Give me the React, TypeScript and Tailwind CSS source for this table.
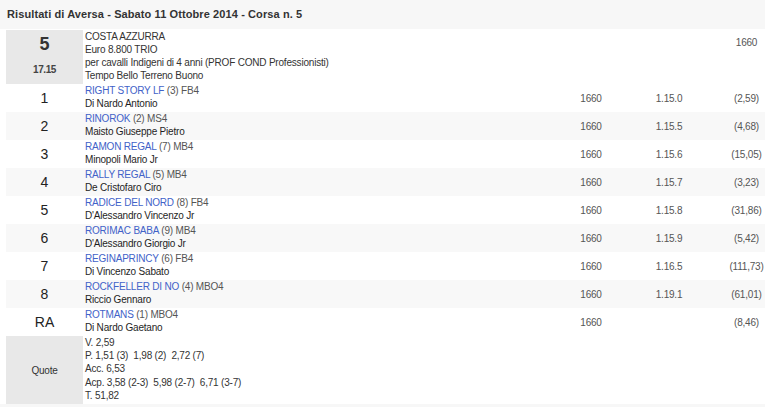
const rows = [
  { pos: '1', horse: 'RIGHT STORY LF', info: '(3) FB4', jockey: 'Di Nardo Antonio', dist: '1660', time: '1.15.0', odds: '(2,59)' },
  { pos: '2', horse: 'RINOROK', info: '(2) MS4', jockey: 'Maisto Giuseppe Pietro', dist: '1660', time: '1.15.5', odds: '(4,68)' },
  { pos: '3', horse: 'RAMON REGAL', info: '(7) MB4', jockey: 'Minopoli Mario Jr', dist: '1660', time: '1.15.6', odds: '(15,05)' },
  { pos: '4', horse: 'RALLY REGAL', info: '(5) MB4', jockey: 'De Cristofaro Ciro', dist: '1660', time: '1.15.7', odds: '(3,23)' },
  { pos: '5', horse: 'RADICE DEL NORD', info: '(8) FB4', jockey: "D'Alessandro Vincenzo Jr", dist: '1660', time: '1.15.8', odds: '(31,86)' },
  { pos: '6', horse: 'RORIMAC BABA', info: '(9) MB4', jockey: "D'Alessandro Giorgio Jr", dist: '1660', time: '1.15.9', odds: '(5,42)' },
  { pos: '7', horse: 'REGINAPRINCY', info: '(6) FB4', jockey: 'Di Vincenzo Sabato', dist: '1660', time: '1.16.5', odds: '(111,73)' },
  { pos: '8', horse: 'ROCKFELLER DI NO', info: '(4) MBO4', jockey: 'Riccio Gennaro', dist: '1660', time: '1.19.1', odds: '(61,01)' },
  { pos: 'RA', horse: 'ROTMANS', info: '(1) MBO4', jockey: 'Di Nardo Gaetano', dist: '1660', time: '', odds: '(8,46)' },
];

const quote = [
  'V. 2,59',
  'P. 1,51 (3)  1,98 (2)  2,72 (7)',
  'Acc. 6,53',
  'Acp. 3,58 (2-3)  5,98 (2-7)  6,71 (3-7)',
  'T. 51,82',
];

export default function App() {
  return (
    <div className="h-[407px] w-[765px] overflow-hidden bg-white font-['Liberation_Sans',Arial,sans-serif] text-[10px] leading-[13px] tracking-[-0.2px] text-[#333]">
      {/* Title bar */}
      <div className="flex h-[29px] items-center bg-[#f7f7f7] pl-[7px] text-[11px] font-bold tracking-[0.1px] text-[#333]">
        Risultati di Aversa - Sabato 11 Ottobre 2014 - Corsa n. 5
      </div>

      <div className="ml-[6px] w-[759px]">
        {/* Race info */}
        <div className="flex h-[55px] pt-px">
          <div className="flex w-[77px] flex-col items-center bg-[#e8e8e8]">
            <div className="mt-[4px] text-[18px] leading-[20px] font-bold tracking-normal">5</div>
            <div className="mt-[9px] text-[10px] font-bold tracking-[-0.4px] text-[#444]">17.15</div>
          </div>
          <div className="flex-1 pl-[2px]">
            <div>COSTA AZZURRA</div>
            <div>Euro 8.800 TRIO</div>
            <div>per cavalli Indigeni di 4 anni (PROF COND Professionisti)</div>
            <div>Tempo Bello Terreno Buono</div>
          </div>
          <div className="flex w-[37px] justify-center whitespace-nowrap pt-[6px] text-[#555]">1660</div>
        </div>

        {/* Results */}
        {rows.map((r, i) => (
          <div key={r.pos} className={`flex h-[28px] items-center ${i % 2 === 1 ? 'bg-[#f8f8f8]' : 'bg-white'}`}>
            <div className="w-[77px] text-center text-[14px] leading-[16px] tracking-normal text-[#222]">{r.pos}</div>
            <div className="flex-1 self-start pl-[2px]">
              <div>
                <span className="text-[#4262c8]">{r.horse}</span>{' '}
                <span className="text-[#555]">{r.info}</span>
              </div>
              <div className="text-[#1f1f1f]">{r.jockey}</div>
            </div>
            <div className="w-[38px] text-center text-[#555]">{r.dist}</div>
            <div className="w-[118px] text-center text-[#555]">{r.time}</div>
            <div className="flex w-[37px] justify-center whitespace-nowrap text-[#555]">{r.odds}</div>
          </div>
        ))}

        {/* Quote */}
        <div className="flex h-[68px]">
          <div className="flex w-[77px] items-center justify-center bg-[#e8e8e8] text-[#333]">Quote</div>
          <div className="flex-1 pl-[2px]">
            {quote.map((q) => (
              <div key={q} className="h-[13.2px] whitespace-pre">{q}</div>
            ))}
          </div>
        </div>
      </div>
      <div className="h-[4px] bg-[#f7f7f7]" />
    </div>
  );
}
